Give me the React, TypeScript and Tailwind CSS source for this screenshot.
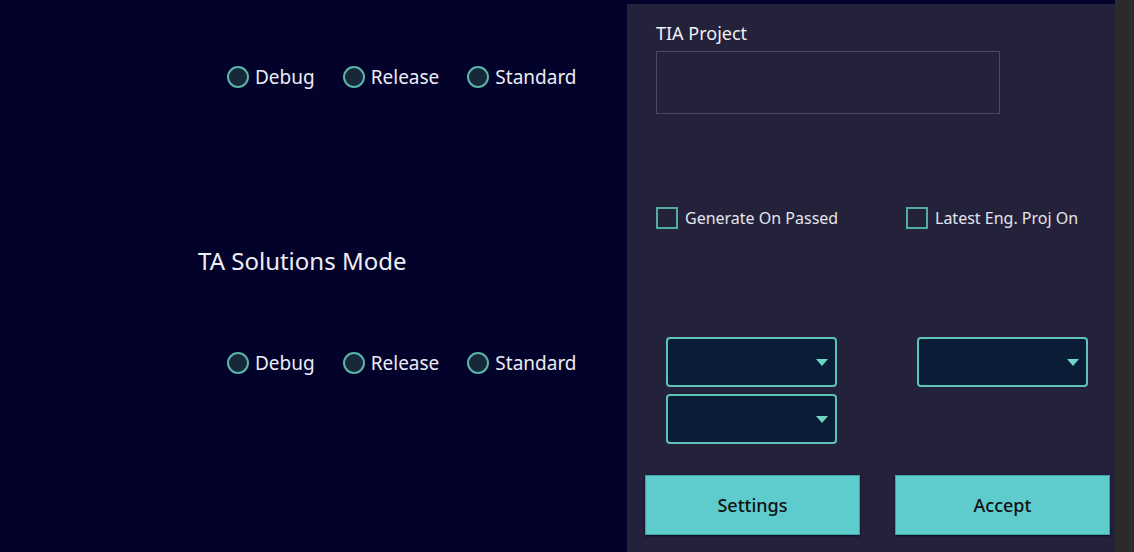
const font = { fontFamily: "'Noto Sans', 'Open Sans', sans-serif" };

const Radio = ({ label }: { label: string }) => (
  <label className="flex flex-row items-center gap-[6px]">
    <span className="w-[22px] h-[22px] rounded-full border-2 border-[#5bb5a6] bg-[#17283a]" />
    <span className="text-[19px] text-[#ececf4] leading-none">{label}</span>
  </label>
);

const RadioRow = () => (
  <div className="flex flex-row items-center gap-[28px] pl-[29px]">
    <Radio label="Debug" />
    <Radio label="Release" />
    <Radio label="Standard" />
  </div>
);

const Check = ({ label }: { label: string }) => (
  <label className="flex flex-row items-center gap-[7px]">
    <span className="w-[22px] h-[22px] border-2 border-[#4fae9e] bg-[#23223a]" />
    <span className="text-[16px] text-[#e4e4ec] leading-none">{label}</span>
  </label>
);

const Dropdown = () => (
  <div className="w-[171px] h-[50px] rounded-[4px] border-2 border-[#5cc3b6] bg-[#0b1c37] flex flex-row items-center justify-end pr-[7px]">
    <svg width="12" height="7" viewBox="0 0 12 7">
      <path d="M0 0 H12 L6 7 Z" fill="#6fd6c4" />
    </svg>
  </div>
);

export default function App() {
  return (
    <div className="w-full h-[552px] bg-[#03022a] flex flex-row overflow-hidden" style={font}>
      <div className="w-[627px] flex flex-col pl-[198px]">
        <div className="-mt-[22px] text-[22px] text-[#2a2944] leading-[24px] h-[24px]">TA Framework Mode</div>
        <div className="mt-[64px]">
          <RadioRow />
        </div>
        <div className="mt-[159px] text-[24px] text-[#eeeef4] leading-[28px]">TA Solutions Mode</div>
        <div className="mt-[77px]">
          <RadioRow />
        </div>
      </div>
      <div className="w-[488px] mt-[4px] bg-[#24223b] flex flex-col">
        <div className="pl-[29px] pt-[18px]">
          <div className="text-[18px] text-[#f0f0f5] leading-[22px]">TIA Project</div>
          <div className="mt-[7px] w-[344px] h-[63px] border border-[#4a4862] bg-[#24223b]" />
        </div>
        <div className="pl-[29px] mt-[93px] grid grid-cols-[250px_200px]">
          <Check label="Generate On Passed" />
          <Check label="Latest Eng. Proj On" />
        </div>
        <div className="pl-[39px] mt-[108px] grid grid-cols-[251px_171px] gap-y-[7px]">
          <Dropdown />
          <Dropdown />
          <Dropdown />
        </div>
        <div className="pl-[18px] mt-[31px] grid grid-cols-[215px_215px] gap-x-[35px]">
          <button className="h-[60px] bg-[#5ecbcc] border border-[#3aa3a6] text-[18px] font-medium text-[#111] shadow-[0_1px_2px_#0a0a20]">
            Settings
          </button>
          <button className="h-[60px] bg-[#5ecbcc] border border-[#3aa3a6] text-[18px] font-medium text-[#111] shadow-[0_1px_2px_#0a0a20]">
            Accept
          </button>
        </div>
      </div>
      <div className="w-[19px] bg-[#2b2b2b]" />
    </div>
  );
}
